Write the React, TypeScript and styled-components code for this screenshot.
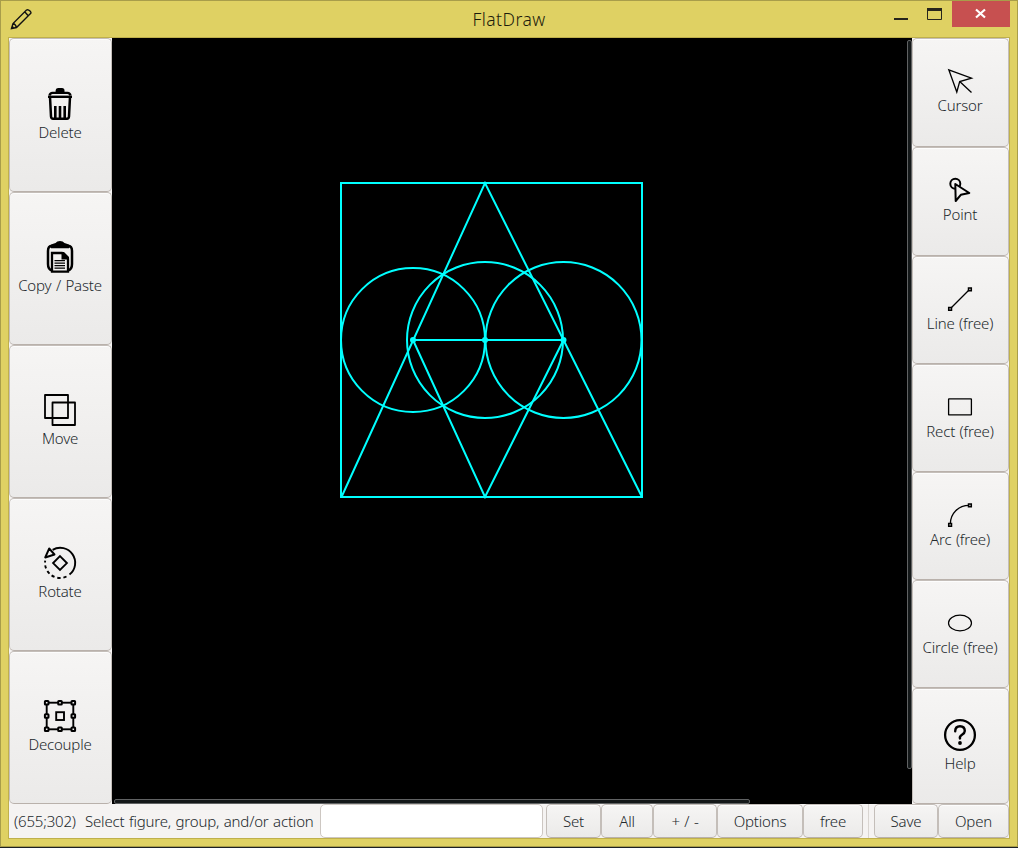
import React from 'react';
import styled, { createGlobalStyle } from 'styled-components';

const GlobalStyle = createGlobalStyle`
  * { box-sizing: border-box; }
  body { margin: 0; overflow: hidden; }
  button, input { font: inherit; color: inherit; outline: none; letter-spacing: inherit; word-spacing: inherit; }
`;

const Desktop = styled.div`
  width: 1018px;
  height: 848px;
  padding-bottom: 1px;
  background: #1c2024;
`;

const Window = styled.div`
  height: 847px;
  display: flex;
  flex-direction: column;
  padding: 0 7px 7px;
  border: 1px solid #a89d4a;
  background: #dfd163;
  font-family: "Noto Sans", "Liberation Sans", sans-serif;
  font-size: 15px;
  font-weight: 350;
  letter-spacing: -.18px;
  word-spacing: .8px;
  color: #22282c;
`;

const TitleBar = styled.header`
  height: 36px;
  flex: none;
  display: grid;
  grid-template-columns: 124px 1fr 124px;
  align-items: start;
`;

const AppIcon = styled.svg`
  width: 24px;
  height: 24px;
  margin: 6px 0 0 1px;
`;

const Title = styled.h1`
  margin: 6px 0 0;
  text-align: center;
  font-size: 17.500px;
  line-height: 24px;
  letter-spacing: .45px;
  font-weight: 350;
  color: #1c1b0c;
`;

const WindowControls = styled.div`
  display: flex;
  justify-content: flex-end;
`;

const Control = styled.button<{ $w: number; $close?: boolean }>`
  width: ${p => p.$w}px;
  height: 26px;
  padding: 0;
  border: 0;
  display: flex;
  background: ${p => (p.$close ? '#c75050' : 'transparent')};
`;

const Client = styled.main`
  flex: 1;
  min-height: 0;
  display: flex;
  flex-direction: column;
  border: 1px solid #bfb04c;
  background: #f5f3f2;
`;

const Workspace = styled.div`
  height: 766px;
  flex: none;
  display: flex;
`;

const Tools = styled.nav<{ $w: number; $rows: string }>`
  width: ${p => p.$w}px;
  flex: none;
  display: grid;
  grid-template-rows: ${p => p.$rows};
`;

const face = `
  border: 1px solid #c4beb9;
  border-bottom-color: #b9b1ab;
  border-radius: 5px;
  background: linear-gradient(#f6f5f4, #ebeae9);
  box-shadow: inset 0 1px 0 #fdfdfd;
`;

const Tool = styled.button`
  ${face}
  padding: 0 1px 2px 0;
  display: flex;
  flex-direction: column;
  align-items: center;
  justify-content: center;
`;

const ToolIcon = styled.svg<{ $size: number }>`
  width: ${p => p.$size}px;
  height: ${p => p.$size}px;
  flex: none;
  overflow: visible;
  fill: none;
  stroke: #000;
`;

const ToolLabel = styled.span`
  height: 21px;
  line-height: 25px;
  white-space: nowrap;
`;

const CanvasPane = styled.section`
  flex: 1;
  display: grid;
  grid-template: 761px 5px / 795px 5px;
  background: #000;
`;

const Drawing = styled.svg`
  width: 795px;
  height: 761px;
  fill: none;
  stroke: #0ff;
  stroke-width: 2;
`;

const ScrollThumb = styled.div<{ $vertical?: boolean }>`
  width: ${p => (p.$vertical ? '5px' : '636px')};
  height: ${p => (p.$vertical ? '729px' : '5px')};
  margin: ${p => (p.$vertical ? '2px 0 0' : '0 0 0 2px')};
  border: 1px solid #606263;
  border-radius: 2px;
  background: #141819;
`;

const StatusBar = styled.footer`
  height: 34px;
  flex: none;
  display: flex;
  align-items: stretch;
  line-height: 32px;
  white-space: nowrap;
`;

const Status = styled.span<{ $w: number }>`
  width: ${p => p.$w}px;
  flex: none;
  padding-top: 1px;
`;

const Coordinates = styled(Status)`
  margin-left: 5px;
`;

const Command = styled.input`
  width: 223px;
  margin-right: 3px;
  border: 1px solid #cdc7c2;
  border-radius: 5px;
  background: #fff;
`;

const BarButton = styled.button<{ $w: number }>`
  ${face}
  width: ${p => p.$w}px;
  flex: none;
  padding: 0;
  text-align: center;
`;

const Divider = styled.i`
  width: 1px;
  margin: 0 5px;
  background: #d9d5d1;
`;

const leftTools = [
  {
    label: 'Delete',
    icon: (
      <>
        <path d="M12.800 4V2.500Q12.800 1.200 14 1.200h4Q19.300 1.200 19.300 2.500V4" strokeWidth="2.400" fill="#000" />
        <path d="M5.500 7.500Q6 4.800 8.500 4.800h15Q26 4.800 26.500 7.500" strokeWidth="2.300" />
        <path d="M4 8.800h24" strokeWidth="2.400" />
        <path d="M6 9l1 19.500Q7.200 30.800 9 30.800h14Q24.800 30.800 25 28.500L26 9" strokeWidth="2.500" />
        <path d="M11.300 18v12M16 18v12M20.700 18v12" strokeWidth="2.600" />
      </>
    ),
  },
  {
    label: 'Copy / Paste',
    icon: (
      <>
        <path d="M8 4.800Q4 5 4 10v13Q4 28.500 8 29.500M24 4.800Q28 5 28 10v13Q28 28.500 24 29.500M7 6h18" strokeWidth="2.500" />
        <path d="M5.500 6.500V5.200Q7 3 11.500 2Q13 0 16 0Q19 0 20.500 2Q25 3 26.500 5.200V6.500Z" fill="#000" stroke="none" />
        <path d="M8 30.700V12h10l6 6v12.700Z" strokeWidth="2.300" fill="#f2f1f0" />
        <path d="M17.500 11h2.500l5 5v2.500h-7.500Z" fill="#000" stroke="none" />
        <path d="M10.500 19.700h10.500M10.500 22.200h10.500M10.500 24.700h10.500M10.500 27.200h10.500" strokeWidth="1.300" />
      </>
    ),
  },
  {
    label: 'Move',
    icon: <path d="M1 1h23v23H1ZM8.500 8.500H31V31H8.500Z" strokeWidth="1.800" strokeLinejoin="round" />,
  },
  {
    label: 'Rotate',
    icon: (
      <g strokeWidth="1.900">
        <path d="M8.600 2.900A15 15 0 0 1 25.500 27.600" />
        <path d="M22.500 29.500A15 15 0 0 1 1.200 13.700" strokeDasharray="3.300 2.800" />
        <path d="M5.200 1.500L1.200 10.500L10.500 7.500Z" strokeLinejoin="round" />
        <path d="M16 9.200L22.900 16.100L16 23L9.100 16.100Z" />
      </g>
    ),
  },
  {
    label: 'Decouple',
    icon: (
      <>
        <rect x="2.700" y="2.700" width="26.600" height="26.600" strokeWidth="1.900" />
        <rect x="12.200" y="12.200" width="7.800" height="7.800" strokeWidth="1.900" />
        {[[2.700, 2.700], [16, 2.700], [29.300, 2.700], [2.700, 16], [29.300, 16], [2.700, 29.300], [16, 29.300], [29.300, 29.300]].map(([x, y]) => (
          <rect key={`${x}-${y}`} x={x - 1.8} y={y - 1.8} width="3.600" height="3.600" rx=".6" fill="#f2f1f0" strokeWidth="2" />
        ))}
      </>
    ),
  },
];

const rightTools = [
  { label: 'Cursor', icon: <path d="M.8.800L8.800 23L11.700 12.500L23.500 9.200ZM11.700 12.500L23.500 23.500" strokeWidth="1.300" /> },
  {
    label: 'Point',
    icon: (
      <>
        <circle cx="7.300" cy="5.700" r="5" strokeWidth="2" />
        <path d="M7.300 6L21.300 15L12.800 16.800L7.700 23Z" strokeWidth="2" strokeLinejoin="round" fill="#f2f1f0" />
      </>
    ),
  },
  {
    label: 'Line (free)',
    icon: (
      <>
        <path d="M2.500 21.500L21.500 2.500" strokeWidth="1.300" />
        <path d="M.7 20.400h2.800v2.800H.7ZM20.500.9h2.800v2.800H20.500Z" fill="#ccc" strokeWidth="1.500" />
      </>
    ),
  },
  { label: 'Rect (free)', icon: <rect x=".6" y="3.900" width="22.800" height="16" rx=".4" strokeWidth="1.300" /> },
  {
    label: 'Arc (free)',
    icon: (
      <>
        <path d="M2.300 21C2.300 10.500 10.500 2.300 21 2.300" strokeWidth="1.300" />
        <path d="M.7 20.400h2.800v2.800H.7ZM20.500.9h2.800v2.800H20.500Z" fill="#ccc" strokeWidth="1.500" />
      </>
    ),
  },
  { label: 'Circle (free)', icon: <ellipse cx="12" cy="12" rx="11.500" ry="7.900" strokeWidth="1.200" /> },
  {
    label: 'Help',
    size: 32,
    icon: (
      <>
        <circle cx="16" cy="16" r="14.900" strokeWidth="2.300" />
        <path d="M11.200 12.200Q11.200 7.200 16 7.200T20.800 12Q20.800 14 18 15.700T16 19.500" strokeWidth="2.400" strokeLinecap="round" />
        <circle cx="16" cy="24" r="1.900" fill="#000" stroke="none" />
      </>
    ),
  },
];

const ToolButton = ({ label, icon, size = 24 }: { label: string; icon: React.ReactNode; size?: number }) => (
  <Tool>
    <ToolIcon $size={size} viewBox={`0 0 ${size} ${size}`}>{icon}</ToolIcon>
    <ToolLabel>{label}</ToolLabel>
  </Tool>
);

export default function App() {
  return (
    <>
      <GlobalStyle />
      <Desktop>
        <Window>
          <TitleBar>
            <AppIcon viewBox="0 0 24 24" fill="none" stroke="#111" strokeWidth="1.400">
              <path d="M2.500 21.500L4 16.500L17.500 3Q19 2 21 4T21 7L7.500 20.500ZM4 16.500Q6.500 17 7.500 20.500M15.700 4.800L19.200 8.800M2.500 21.500L4.200 19.500" />
            </AppIcon>
            <Title>FlatDraw</Title>
            <WindowControls>
              <Control $w={34}><svg width="34" height="26"><path d="M1 18h14" stroke="#26251c" strokeWidth="2" /></svg></Control>
              <Control $w={25}><svg width="25" height="26"><path d="M.5 8v10.500h14V8" fill="none" stroke="#26251c" /><path d="M0 8.500h15" stroke="#26251c" strokeWidth="3" /></svg></Control>
              <Control $w={58} $close><svg width="58" height="26"><path d="M24 8.500L33 16.500M33 8.500L24 16.500" stroke="#fff" strokeWidth="2.200" /></svg></Control>
            </WindowControls>
          </TitleBar>
          <Client>
            <Workspace>
              <Tools $w={103} $rows="154px repeat(4, 153px)">
                {leftTools.map(t => <ToolButton key={t.label} {...t} size={32} />)}
              </Tools>
              <CanvasPane>
                <Drawing viewBox="112 38 795 761">
                  <rect x="341" y="183" width="301" height="314" />
                  <circle cx="413" cy="340" r="72" />
                  <circle cx="485" cy="340" r="78" />
                  <circle cx="563.500" cy="340" r="78" />
                  <path d="M341.500 497L485 183L642 497M413 340L485 497L563.500 340M413 340H563.500" />
                  <g fill="#0ff" stroke="none">
                    <circle cx="413" cy="340" r="3" />
                    <circle cx="485" cy="340" r="3" />
                    <circle cx="563.500" cy="340" r="3" />
                  </g>
                </Drawing>
                <ScrollThumb $vertical />
                <ScrollThumb />
              </CanvasPane>
              <Tools $w={97} $rows="109px 109px 108px 108px 108px 108px 116px">
                {rightTools.map(t => <ToolButton key={t.label} {...t} />)}
              </Tools>
            </Workspace>
            <StatusBar>
              <Coordinates $w={71}>(655;302)</Coordinates>
              <Status $w={235}>Select figure, group, and/or action</Status>
              <Command aria-label="Command" />
              <BarButton $w={55}>Set</BarButton>
              <BarButton $w={52}>All</BarButton>
              <BarButton $w={64}>+ / -</BarButton>
              <BarButton $w={86}>Options</BarButton>
              <BarButton $w={60}>free</BarButton>
              <Divider />
              <BarButton $w={64}>Save</BarButton>
              <BarButton $w={71}>Open</BarButton>
            </StatusBar>
          </Client>
        </Window>
      </Desktop>
    </>
  );
}
